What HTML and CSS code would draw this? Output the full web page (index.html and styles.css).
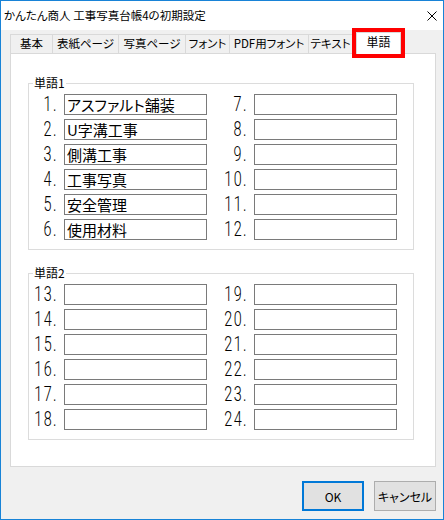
FILE: index.html
```html
<!DOCTYPE html>
<html lang="ja">
  <head>
    <meta charset="UTF-8" />
    <meta name="viewport" content="width=device-width, initial-scale=1.0" />
    <title>かんたん商人 工事写真台帳4の初期設定</title>
    <link rel="stylesheet" href="styles.css">
  </head>
  <body>
    <div class="window">
      <header class="titlebar">
        <span class="titlebar__text">かんたん商人 工事写真台帳4の初期設定</span>
        <span class="titlebar__close">
          <svg width="10" height="10" viewBox="0 0 10 10">
            <path d="M0.5 0.5 L9.5 9.5 M9.5 0.5 L0.5 9.5" stroke="#000" stroke-width="1" fill="none" />
          </svg>
        </span>
      </header>
      <div class="dialog">
        <nav class="tabs">
          <div class="tab">基本</div>
          <div class="tab">表紙ページ</div>
          <div class="tab">写真ページ</div>
          <div class="tab">フォント</div>
          <div class="tab">PDF用フォント</div>
          <div class="tab">テキスト</div>
          <div class="tab tab--active">単語</div>
        </nav>
        <main class="panel">
          <fieldset class="group">
            <legend class="group__title">単語1</legend>
            <div class="word-grid">
              <div class="word-num"><span>1.</span></div>
              <input class="word-input" type="text" value="アスファルト舗装">
              <div class="word-num"><span>7.</span></div>
              <input class="word-input" type="text" value="">
              <div class="word-num"><span>2.</span></div>
              <input class="word-input" type="text" value="U字溝工事">
              <div class="word-num"><span>8.</span></div>
              <input class="word-input" type="text" value="">
              <div class="word-num"><span>3.</span></div>
              <input class="word-input" type="text" value="側溝工事">
              <div class="word-num"><span>9.</span></div>
              <input class="word-input" type="text" value="">
              <div class="word-num"><span>4.</span></div>
              <input class="word-input" type="text" value="工事写真">
              <div class="word-num"><span>10.</span></div>
              <input class="word-input" type="text" value="">
              <div class="word-num"><span>5.</span></div>
              <input class="word-input" type="text" value="安全管理">
              <div class="word-num"><span>11.</span></div>
              <input class="word-input" type="text" value="">
              <div class="word-num"><span>6.</span></div>
              <input class="word-input" type="text" value="使用材料">
              <div class="word-num"><span>12.</span></div>
              <input class="word-input" type="text" value="">
            </div>
          </fieldset>
          <fieldset class="group group--second">
            <legend class="group__title">単語2</legend>
            <div class="word-grid">
              <div class="word-num"><span>13.</span></div>
              <input class="word-input" type="text" value="">
              <div class="word-num"><span>19.</span></div>
              <input class="word-input" type="text" value="">
              <div class="word-num"><span>14.</span></div>
              <input class="word-input" type="text" value="">
              <div class="word-num"><span>20.</span></div>
              <input class="word-input" type="text" value="">
              <div class="word-num"><span>15.</span></div>
              <input class="word-input" type="text" value="">
              <div class="word-num"><span>21.</span></div>
              <input class="word-input" type="text" value="">
              <div class="word-num"><span>16.</span></div>
              <input class="word-input" type="text" value="">
              <div class="word-num"><span>22.</span></div>
              <input class="word-input" type="text" value="">
              <div class="word-num"><span>17.</span></div>
              <input class="word-input" type="text" value="">
              <div class="word-num"><span>23.</span></div>
              <input class="word-input" type="text" value="">
              <div class="word-num"><span>18.</span></div>
              <input class="word-input" type="text" value="">
              <div class="word-num"><span>24.</span></div>
              <input class="word-input" type="text" value="">
            </div>
          </fieldset>
        </main>
        <div class="buttons">
          <button class="button button--default">OK</button>
          <button class="button">キャンセル</button>
        </div>
      </div>
    </div>
  </body>
</html>
```

FILE: styles.css
```css
* {
  box-sizing: border-box;
}
body {
  margin: 0;
  font-family: "Noto Sans CJK JP", "Noto Sans", sans-serif;
  font-feature-settings: "palt";
  color: #000;
}
.window {
  width: 444px;
  height: 520px;
  border: 1px solid #1883d7;
  display: flex;
  flex-direction: column;
  background-color: #f0f0f0;
}
.titlebar {
  height: 29px;
  background-color: #fff;
  display: flex;
  align-items: center;
  justify-content: space-between;
  padding: 0 6px 2px 3px;
}
.titlebar__text {
  font-size: 11.5px;
  line-height: 14px;
}
.titlebar__close {
  display: flex;
  margin-top: 2px;
}
.dialog {
  flex: 1;
  display: flex;
  flex-direction: column;
  padding: 2px 7px 0 9px;
}
.tabs {
  display: flex;
  align-items: flex-end;
  height: 21px;
  position: relative;
  z-index: 1;
}
.tab {
  height: 19px;
  border: 1px solid #d9d9d9;
  border-bottom: none;
  background-color: #f0f0f0;
  margin-left: -1px;
  font-size: 11.5px;
  line-height: 17px;
  text-align: center;
  white-space: nowrap;
}
.tab:nth-child(1) {
  width: 43px;
  margin-left: 0;
}
.tab:nth-child(2) {
  width: 67px;
}
.tab:nth-child(3) {
  width: 68px;
}
.tab:nth-child(4) {
  width: 45px;
}
.tab:nth-child(5) {
  width: 80px;
}
.tab:nth-child(6) {
  width: 45px;
}
.tab--active {
  width: 45px;
  height: 22px;
  margin-left: 3px;
  margin-bottom: -1px;
  background-color: #fff;
  font-size: 12px;
  line-height: 18px;
  outline: 4px solid #ff0000;
}
.panel {
  height: 414px;
  background-color: #fff;
  border: 1px solid #d9d9d9;
  padding: 0 21px 0 17px;
}
.group {
  margin: 21px 0 0;
  padding: 3px 0 9px;
  border: 1px solid #dcdcdc;
  min-width: 0;
}
.group--second {
  margin-top: 15px;
}
.group__title {
  margin-left: 4px;
  padding: 0 1px;
  font-size: 12px;
  line-height: 16px;
}
.word-grid {
  display: grid;
  grid-template-columns: 35px 143px 47px 143px;
  grid-auto-rows: 21px;
  row-gap: 4px;
  align-items: center;
}
.word-num {
  display: flex;
  justify-content: flex-end;
  padding-right: 6px;
  font-family: Roboto, "Liberation Sans", sans-serif;
  font-weight: 300;
  font-size: 20px;
  line-height: 21px;
}
.word-num span {
  display: inline-block;
  transform: scaleX(0.72);
  transform-origin: right center;
  letter-spacing: 2px;
  white-space: nowrap;
}
.word-input {
  width: 143px;
  height: 21px;
  margin: 0;
  padding: 0 2px;
  border: 1px solid #7a7a7a;
  border-radius: 0;
  background-color: #fff;
  font-family: "Noto Sans CJK JP", sans-serif;
  font-feature-settings: "palt";
  font-size: 15px;
  color: #000;
  outline: none;
}
.buttons {
  display: flex;
  justify-content: flex-end;
  gap: 10px;
  margin-top: 14px;
}
.button {
  width: 62px;
  height: 30px;
  margin: 0;
  padding: 0;
  border: 1px solid #adadad;
  background-color: #e1e1e1;
  font-family: "Noto Sans CJK JP", sans-serif;
  font-feature-settings: "palt";
  font-size: 12px;
  color: #000;
}
.button--default {
  border: 2px solid #0078d7;
}
```
